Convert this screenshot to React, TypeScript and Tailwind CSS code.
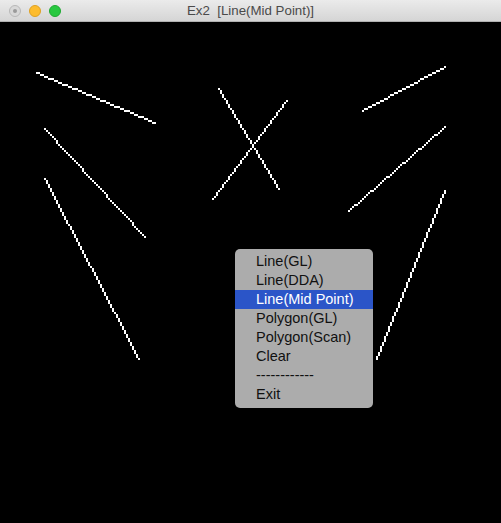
import React from 'react';

const LINES: [number, number, number, number][] = [
  [37, 72, 155, 122],
  [45, 129, 145, 236],
  [45, 179, 139, 358],
  [218, 89, 278, 188],
  [287, 100, 213, 198],
  [444, 67, 363, 111],
  [444, 127, 348, 211],
  [444, 191, 376, 358],
];

const MENU_ITEMS = ['Line(GL)', 'Line(DDA)', 'Line(Mid Point)', 'Polygon(GL)', 'Polygon(Scan)', 'Clear', '------------', 'Exit'];
const SELECTED = 2;

// plain midpoint/bresenham on a half-res grid, each point drawn 2x2
function rasterize(x1: number, y1: number, x2: number, y2: number): [number, number][] {
  let x0 = Math.floor(x1 / 2), y0 = Math.floor(y1 / 2);
  const xe = Math.floor(x2 / 2), ye = Math.floor(y2 / 2);
  const dx = Math.abs(xe - x0), dy = -Math.abs(ye - y0);
  const sx = x0 < xe ? 1 : -1, sy = y0 < ye ? 1 : -1;
  let err = dx + dy;
  const pts: [number, number][] = [];
  for (;;) {
    pts.push([x0 * 2, y0 * 2]);
    if (x0 === xe && y0 === ye) break;
    const e2 = 2 * err;
    if (e2 >= dy) { err += dy; x0 += sx; }
    if (e2 <= dx) { err += dx; y0 += sy; }
  }
  return pts;
}

const TitleBar: React.FC = () => (
  <div className="relative h-[22px] flex items-center justify-center bg-gradient-to-b from-[#ebebeb] to-[#d5d5d5] border-b border-[#b1b1b1]">
    <div className="absolute left-[9px] top-[5px] flex gap-[8px]">
      <span className="w-[12px] h-[12px] rounded-full bg-[#d8d8d8] border border-[#b8b8b8] flex items-center justify-center">
        <span className="w-[4px] h-[4px] rounded-full bg-[#9a9a9a]"></span>
      </span>
      <span className="w-[12px] h-[12px] rounded-full bg-[#fdbc2e] border border-[#dea123]"></span>
      <span className="w-[12px] h-[12px] rounded-full bg-[#28c840] border border-[#1ea931]"></span>
    </div>
    <span className="text-[13.3px] text-[#4a4a4a] font-['Liberation_Sans',sans-serif] whitespace-pre">Ex2  [Line(Mid Point)]</span>
  </div>
);

const ContextMenu: React.FC = () => (
  <div className="absolute left-[235px] top-[227px] w-[138px] rounded-[5px] bg-[#acacac] pt-[3px] pb-[4px] font-['Liberation_Sans',sans-serif]">
    {MENU_ITEMS.map((item, i) => (
      <div
        key={item}
        className={`h-[19px] flex items-center pl-[21px] text-[14.5px] ${i === SELECTED ? 'bg-[#2b55c8] text-white' : 'text-[#111]'}`}
      >
        {item}
      </div>
    ))}
  </div>
);

export default function App() {
  return (
    <div className="w-[501px] h-[523px] bg-black flex flex-col overflow-hidden">
      <TitleBar />
      <div className="relative flex-1">
        <svg width="501" height="501" viewBox="0 22 501 501" className="block" shapeRendering="crispEdges">
          {LINES.map(([x1, y1, x2, y2], i) =>
            rasterize(x1, y1, x2, y2).map(([x, y], j) => (
              <rect key={`${i}-${j}`} x={x} y={y} width={2} height={2} fill="#fff" />
            ))
          )}
        </svg>
        <ContextMenu />
      </div>
    </div>
  );
}
